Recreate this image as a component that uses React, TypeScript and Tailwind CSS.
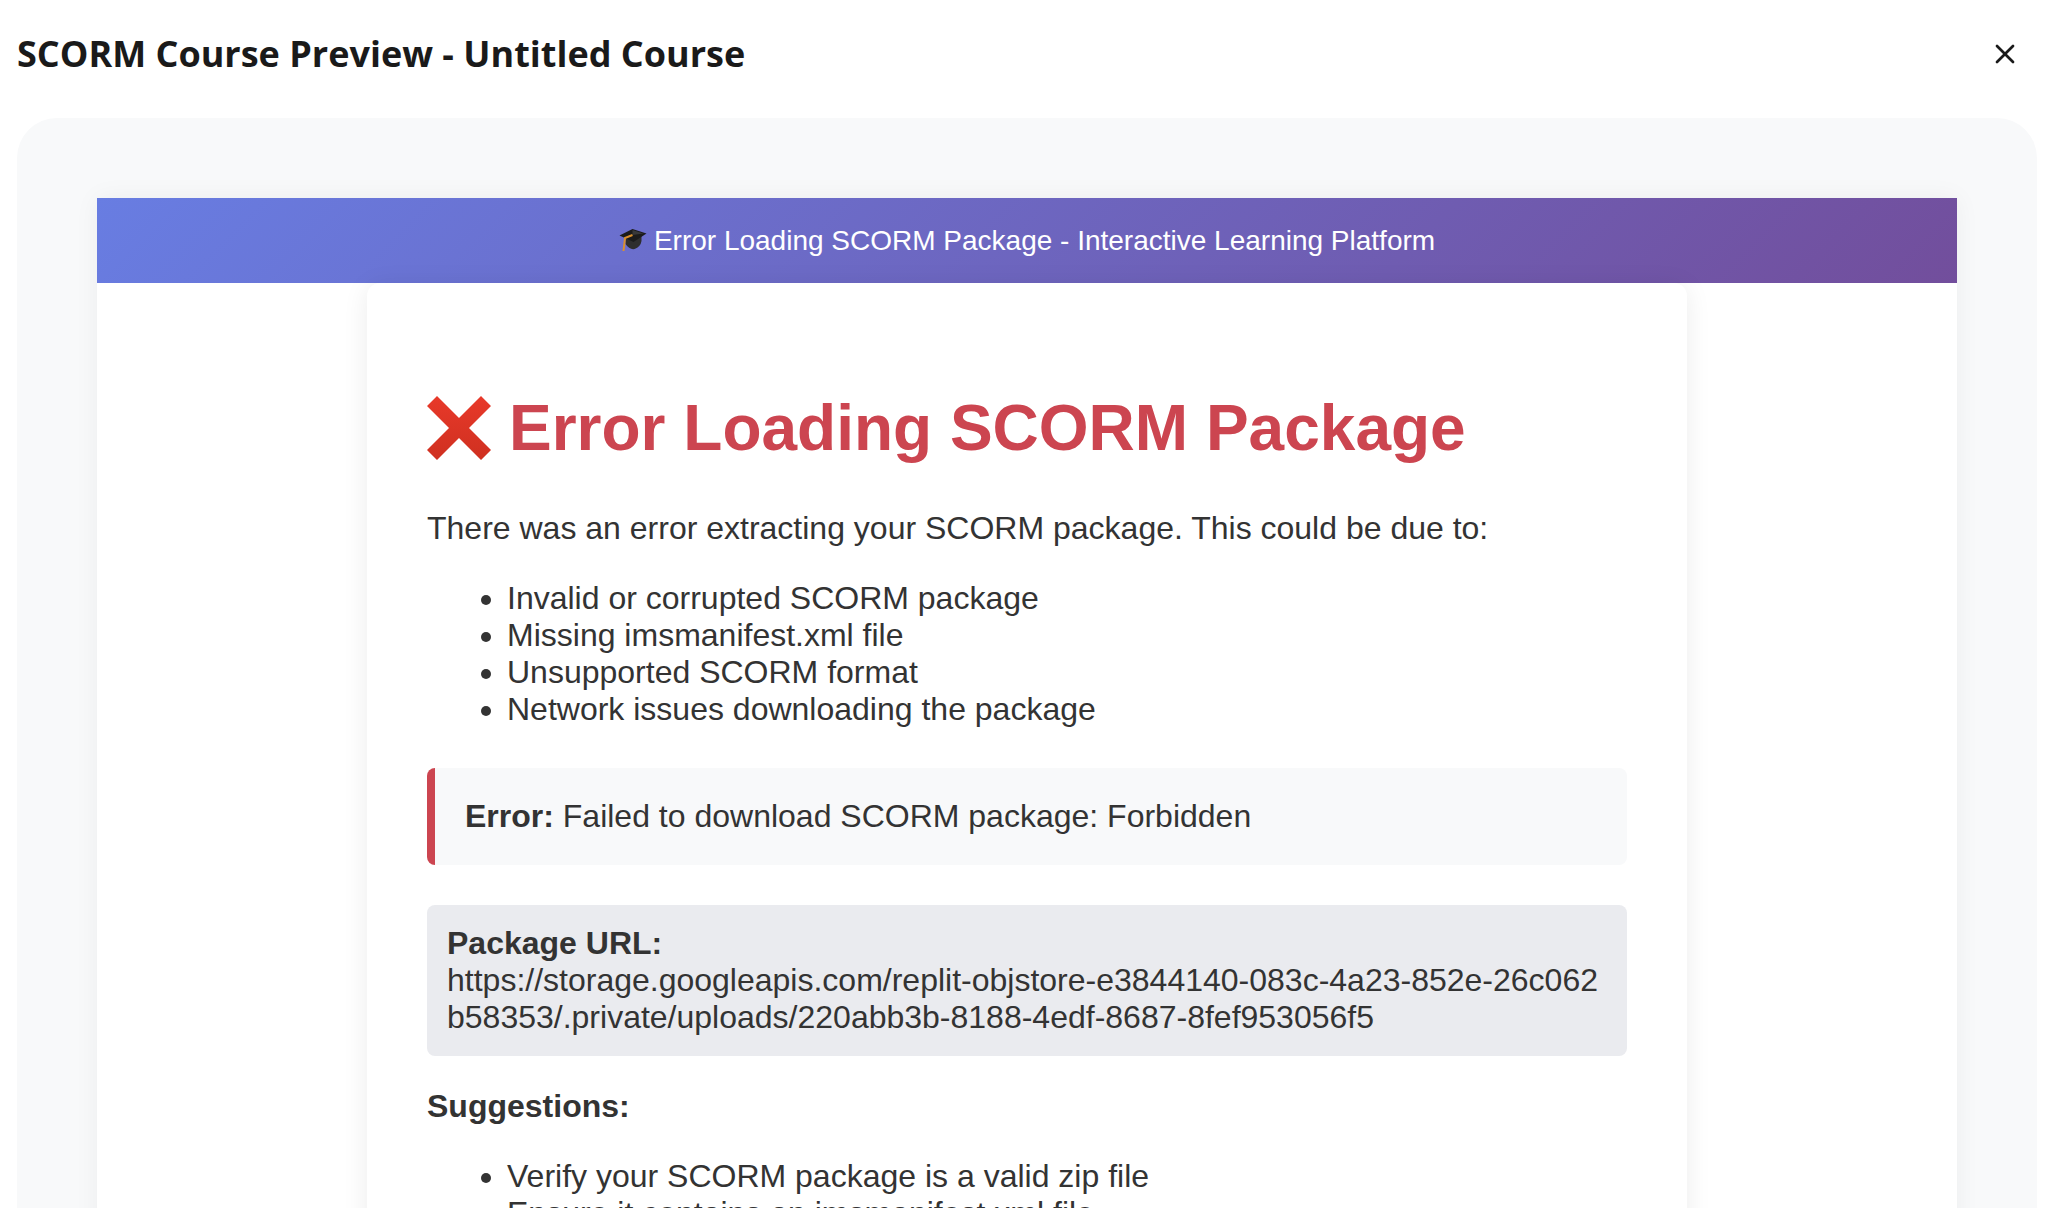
import { X } from "lucide-react";

const CAUSES = [
  "Invalid or corrupted SCORM package",
  "Missing imsmanifest.xml file",
  "Unsupported SCORM format",
  "Network issues downloading the package",
];

const SUGGESTIONS = [
  "Verify your SCORM package is a valid zip file",
  "Ensure it contains an imsmanifest.xml file",
];

function CapIcon() {
  return (
    <svg viewBox="9.5 7 28 28" className="w-[28px] h-[28px] shrink-0">
      <path d="M16 17 L16 24 Q20 30 25 29 Q31 27 32 21 L32 15 Z" fill="#2e2e2e" />
      <path d="M23 9 L37 13.5 L24 22 L10 15.5 Z" fill="#1b1b1b" />
      <path d="M23 10 L34 13.5 L23 15 Z" fill="#383838" />
      <path d="M23 15 L15.5 18 L14 31" fill="none" stroke="#d9902f" strokeWidth="2" />
    </svg>
  );
}

function CrossIcon() {
  return (
    <svg viewBox="0 0 64 64" className="w-[64px] h-[64px] shrink-0">
      <defs>
        <linearGradient id="cross" x1="0" y1="0" x2="0" y2="1">
          <stop offset="0" stopColor="#e8392a" />
          <stop offset="1" stopColor="#cf3020" />
        </linearGradient>
      </defs>
      <path d="M10 0 L32 22 L54 0 L64 10 L42 32 L64 54 L54 64 L32 42 L10 64 L0 54 L22 32 L0 10 Z" fill="url(#cross)" />
    </svg>
  );
}

export default function App() {
  return (
    <div className="h-[1208px] overflow-hidden bg-white">
      <header className="h-[118px] flex items-center justify-between pl-[17px] pr-[41px] pb-[10px]">
        <h2 className="text-[36px] font-bold text-[#1a1a1a] font-['Open_Sans',sans-serif]">
          SCORM Course Preview - Untitled Course
        </h2>
        <X className="w-8 h-8 text-[#1a1a1a]" />
      </header>

      <div className="ml-[17px] mr-[25px] h-[1200px] rounded-t-[40px] bg-[#f8f9fa] px-[80px] pt-[80px]">
        <div className="h-full bg-white shadow-[0_0_24px_rgba(0,0,0,0.05)] font-['Liberation_Sans',sans-serif] text-[#333]">
          <div className="h-[85px] flex items-center justify-center gap-[7px] bg-[linear-gradient(135deg,#687de2,#724e9c)] text-white text-[28px]">
            <CapIcon />
            <span>Error Loading SCORM Package - Interactive Learning Platform</span>
          </div>

          <div className="w-[1320px] mx-auto bg-white rounded-t-[13px] shadow-[0_3px_26px_rgba(0,0,0,0.08)] p-[60px] text-[32px] leading-[37px]">
            <h1 className="flex items-center gap-[18px] h-[90px] mt-[40px] text-[64px] font-bold text-[#cc4550]">
              <CrossIcon />
              <span>Error Loading SCORM Package</span>
            </h1>

            <p className="mt-[37px]">There was an error extracting your SCORM package. This could be due to:</p>

            <ul className="list-disc pl-[80px] mt-[33px]">
              {CAUSES.map((item) => (
                <li key={item}>{item}</li>
              ))}
            </ul>

            <div className="mt-[40px] h-[97px] flex items-center pl-[30px] rounded-[8px] bg-[#f8f9fa] border-l-[8px] border-[#cc4550]">
              <p><strong>Error:</strong> Failed to download SCORM package: Forbidden</p>
            </div>

            <div className="mt-[40px] rounded-[8px] bg-[#eaebef] px-[20px] py-[20px] break-all">
              <strong>Package URL:</strong>
              <br />
              https://storage.googleapis.com/replit-objstore-e3844140-083c-4a23-852e-26c062b58353/.private/uploads/220abb3b-8188-4edf-8687-8fef953056f5
            </div>

            <p className="mt-[32px] font-bold">Suggestions:</p>

            <ul className="list-disc pl-[80px] mt-[33px]">
              {SUGGESTIONS.map((item) => (
                <li key={item}>{item}</li>
              ))}
            </ul>
          </div>
        </div>
      </div>
    </div>
  );
}
